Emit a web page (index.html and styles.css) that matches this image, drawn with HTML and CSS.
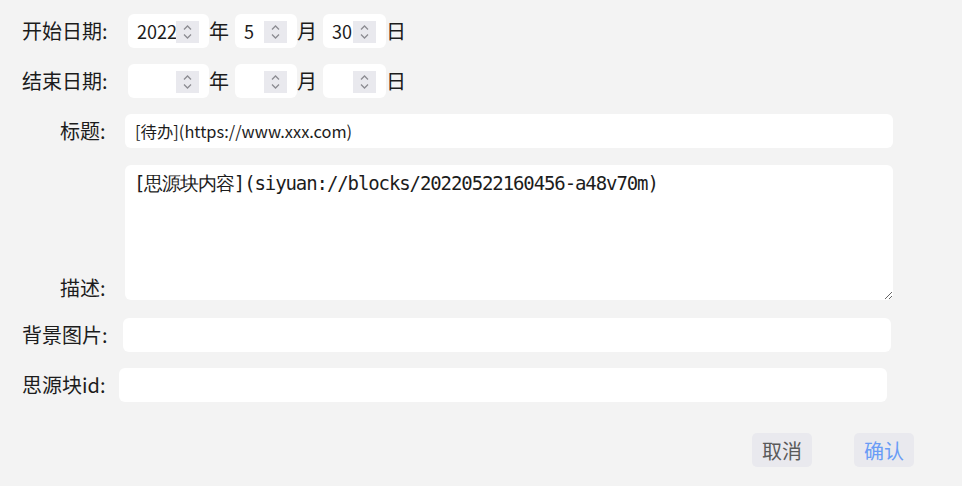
FILE: index.html
```html
<!DOCTYPE html>
<html lang="zh">
<head>
<meta charset="utf-8">
<title>表单</title>
<link rel="stylesheet" href="styles.css">
</head>
<body>
<div class="form">
  <div class="row">
    <label class="lbl lbl-date">开始日期:</label>
    <span class="num num-y"><input class="num-in" value="2022"><span class="spin"><svg viewBox="0 0 23 22" width="23" height="22"><path d="M8 8.5 L11.5 5 L15 8.5 M8 13.5 L11.5 17 L15 13.5"/></svg></span></span><span class="unit">年</span>
    <span class="num num-m"><input class="num-in" value="5"><span class="spin"><svg viewBox="0 0 23 22" width="23" height="22"><path d="M8 8.5 L11.5 5 L15 8.5 M8 13.5 L11.5 17 L15 13.5"/></svg></span></span><span class="unit">月</span>
    <span class="num num-d"><input class="num-in" value="30"><span class="spin"><svg viewBox="0 0 23 22" width="23" height="22"><path d="M8 8.5 L11.5 5 L15 8.5 M8 13.5 L11.5 17 L15 13.5"/></svg></span></span><span class="unit">日</span>
  </div>
  <div class="row">
    <label class="lbl lbl-date">结束日期:</label>
    <span class="num num-y"><input class="num-in" value=""><span class="spin"><svg viewBox="0 0 23 22" width="23" height="22"><path d="M8 8.5 L11.5 5 L15 8.5 M8 13.5 L11.5 17 L15 13.5"/></svg></span></span><span class="unit">年</span>
    <span class="num num-m"><input class="num-in" value=""><span class="spin"><svg viewBox="0 0 23 22" width="23" height="22"><path d="M8 8.5 L11.5 5 L15 8.5 M8 13.5 L11.5 17 L15 13.5"/></svg></span></span><span class="unit">月</span>
    <span class="num num-d"><input class="num-in" value=""><span class="spin"><svg viewBox="0 0 23 22" width="23" height="22"><path d="M8 8.5 L11.5 5 L15 8.5 M8 13.5 L11.5 17 L15 13.5"/></svg></span></span><span class="unit">日</span>
  </div>
  <div class="row">
    <label class="lbl lbl-short">标题:</label>
    <input class="text text-title" value="[待办](https://www.xxx.com)">
  </div>
  <div class="row row-area">
    <label class="lbl lbl-short lbl-bottom">描述:</label>
    <textarea class="area">[思源块内容](siyuan://blocks/20220522160456-a48v70m)</textarea>
  </div>
  <div class="row row-bg">
    <label class="lbl lbl-bg">背景图片:</label>
    <input class="text" value="">
  </div>
  <div class="row">
    <label class="lbl lbl-id">思源块id:</label>
    <input class="text" value="">
  </div>
  <div class="actions">
    <button class="btn btn-cancel">取消</button>
    <button class="btn btn-ok">确认</button>
  </div>
</div>
</body>
</html>
```
FILE: styles.css
```css
html, body {
  margin: 0;
  padding: 0;
}
body {
  background: #f3f3f3;
  font-family: "Noto Sans CJK SC", "Noto Sans", sans-serif;
  color: #1c1c1c;
  width: 962px;
  height: 486px;
  overflow: hidden;
}
.form {
  display: flex;
  flex-direction: column;
  gap: 16px;
  padding-top: 14px;
}
.row {
  display: flex;
  align-items: center;
  height: 34px;
}
.lbl {
  flex: none;
  box-sizing: border-box;
  padding-left: 22px;
  font-size: 20px;
  line-height: 20px;
  white-space: nowrap;
}
.lbl-date { width: 128px; }
.lbl-short { width: 125px; padding-left: 60px; }
.lbl-bg { width: 123px; }
.lbl-id { width: 119px; }
.lbl-bottom { padding-bottom: 2px; }

.num {
  display: flex;
  align-items: center;
  box-sizing: border-box;
  height: 34px;
  padding: 0 10px 0 9px;
  background: #fff;
  border-radius: 6px;
}
.num-y { width: 81px; }
.num-m { width: 62px; }
.num-d { width: 63px; }
.num-in {
  flex: 1;
  min-width: 0;
  border: none;
  outline: none;
  background: transparent;
  padding: 0;
  font-family: "Noto Sans CJK SC", "Noto Sans", sans-serif;
  font-size: 18px;
  color: #1c1c1c;
}
.spin {
  flex: none;
  width: 23px;
  height: 22px;
  background: #e9e9ee;
  display: block;
  margin-top: 1px;
}
.spin svg {
  display: block;
  fill: none;
  stroke: #8c8c92;
  stroke-width: 1.3;
}
.unit {
  font-size: 20px;
  width: 20px;
  margin-right: 6px;
  line-height: 20px;
}

.text {
  box-sizing: border-box;
  width: 768px;
  height: 34px;
  border: none;
  outline: none;
  border-radius: 6px;
  background: #fff;
  padding: 0 10px;
  font-family: "Noto Sans CJK SC", "Noto Sans", sans-serif;
  font-size: 16px;
  color: #1c1c1c;
}
.text-title { font-size: 16.4px; }

.row-area {
  height: 135px;
  align-items: flex-end;
  margin-top: 1px;
}
.area {
  box-sizing: border-box;
  width: 768px;
  height: 135px;
  border: none;
  outline: none;
  border-radius: 6px;
  background: #fff;
  padding: 6px 9px;
  margin: 0;
  font-family: "DejaVu Sans Mono", monospace;
  font-size: 19px;
  line-height: 24px;
  letter-spacing: -1.1px;
  color: #1c1c1c;
}
.row-bg { margin-top: 2px; }

.actions {
  display: flex;
  justify-content: flex-end;
  gap: 42px;
  padding-right: 48px;
  margin-top: 15px;
}
.btn {
  width: 60px;
  height: 34px;
  border: none;
  border-radius: 5px;
  background: #e9e9ee;
  font-family: "Noto Sans CJK SC", "Noto Sans", sans-serif;
  font-size: 20px;
  padding: 0;
}
.btn-cancel { color: #5a5a5a; }
.btn-ok { color: #6a9cf6; }
```
